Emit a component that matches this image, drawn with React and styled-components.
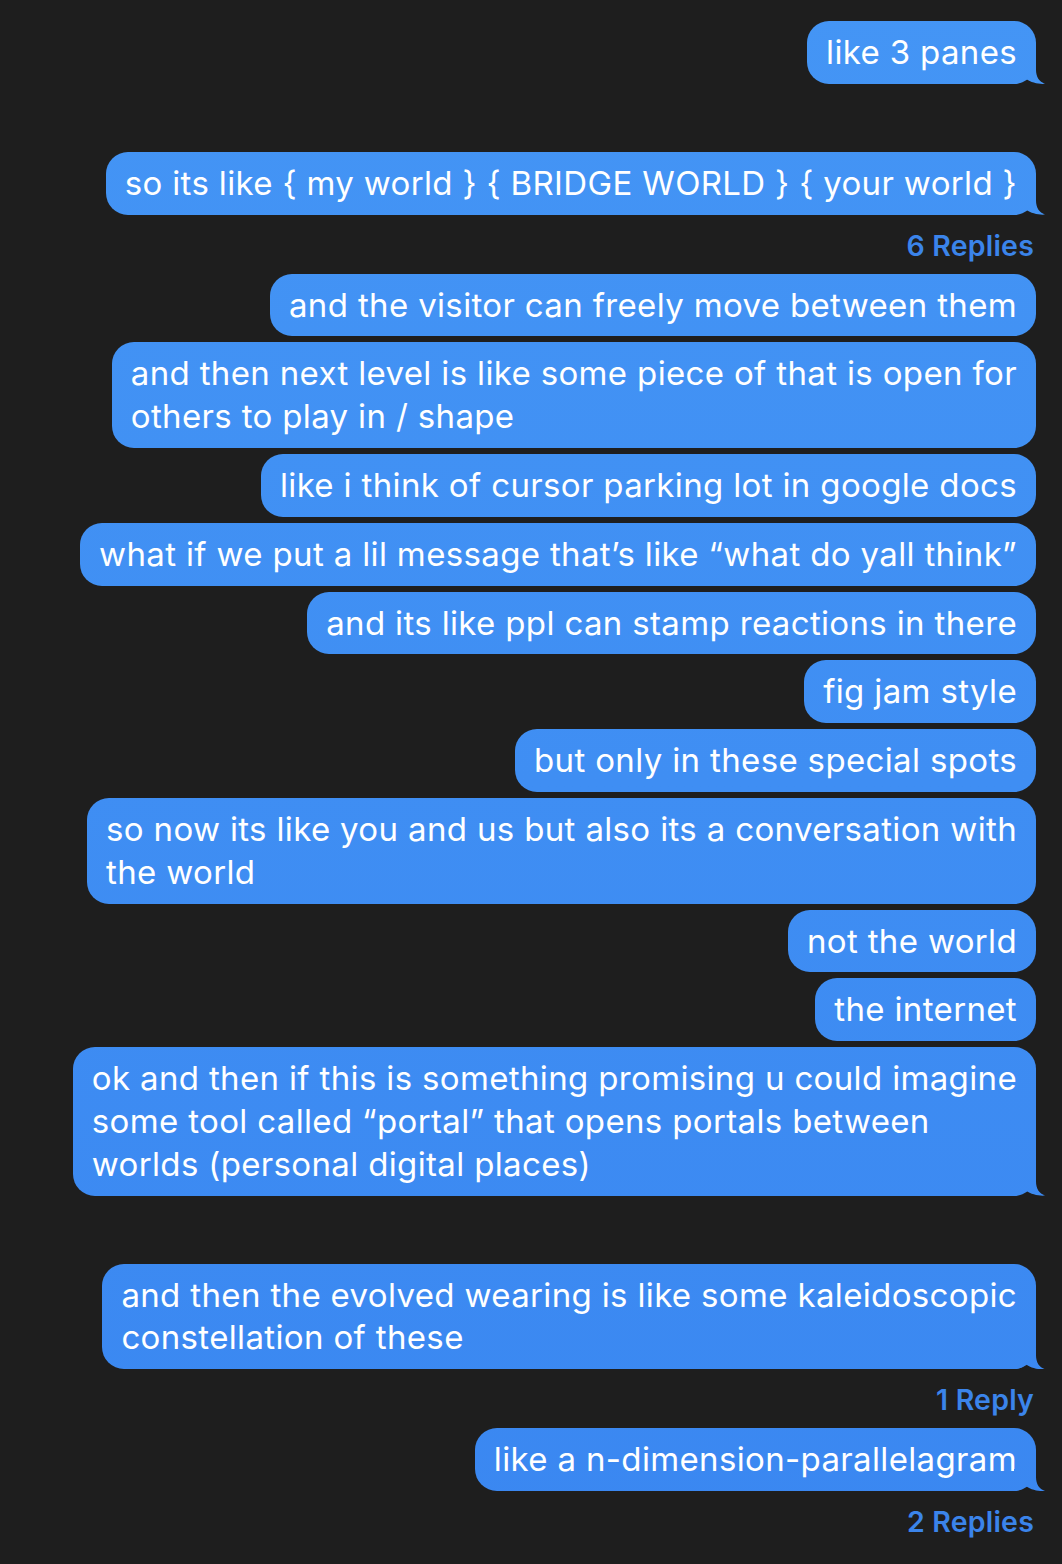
import React from 'react';
import styled, { createGlobalStyle } from 'styled-components';

const Global = createGlobalStyle`
  html, body {
    margin: 0;
    padding: 0;
    background: #1e1e1e;
  }
  body {
    font-family: Inter, "Noto Sans", "Liberation Sans", sans-serif;
    -webkit-font-smoothing: antialiased;
  }
`;

const BLUE = 'linear-gradient(180deg, #4495f5 0%, #3a87f1 100%) fixed';

const Thread = styled.div`
  display: flex;
  flex-direction: column;
  align-items: flex-end;
  gap: 6px;
  padding: 21px 26px 40px 0;
  min-height: 1564px;
  box-sizing: border-box;
`;

const Bubble = styled.div`
  position: relative;
  box-sizing: border-box;
  max-width: 980px;
  padding: 10px 19px;
  margin-top: ${(p) => (p.$spaced ? '62px' : '0')};
  border-radius: 22px;
  background: ${BLUE};
  color: #fff;
  font-size: 33px;
  line-height: 42.8px;
  letter-spacing: 0.35px;
  white-space: nowrap;

  &::after {
    content: ${(p) => (p.$tail ? "''" : 'none')};
    position: absolute;
    right: -9px;
    bottom: 0;
    width: 31px;
    height: 22px;
    background: ${BLUE};
    clip-path: path('M0 0 H22 V8 C22 15 25 20 31 22 C25 22.5 17 21 12 17 C9 20 5 22 0 22 Z');
  }
`;

const Replies = styled.div`
  padding: 8px 2px 5px 0;
  line-height: 34px;
  font-size: 28.5px;
  font-weight: 600;
  letter-spacing: 0.2px;
  color: #3b84ea;
`;

const messages = [
  { lines: ['like 3 panes'], tail: true },
  { lines: ['so its like { my world } { BRIDGE WORLD } { your world }'], tail: true, spaced: true, replies: '6 Replies' },
  { lines: ['and the visitor can freely move between them'] },
  { lines: ['and then next level is like some piece of that is open for', 'others to play in / shape'] },
  { lines: ['like i think of cursor parking lot in google docs'] },
  { lines: ['what if we put a lil message that\u2019s like \u201cwhat do yall think\u201d'] },
  { lines: ['and its like ppl can stamp reactions in there'] },
  { lines: ['fig jam style'] },
  { lines: ['but only in these special spots'] },
  { lines: ['so now its like you and us but also its a conversation with', 'the world'] },
  { lines: ['not the world'] },
  { lines: ['the internet'] },
  {
    lines: [
      'ok and then if this is something promising u could imagine',
      'some tool called \u201cportal\u201d that opens portals between',
      'worlds (personal digital places)',
    ],
    tail: true,
  },
  { lines: ['and then the evolved wearing is like some kaleidoscopic', 'constellation of these'], tail: true, spaced: true, replies: '1 Reply' },
  { lines: ['like a n-dimension-parallelagram'], tail: true, replies: '2 Replies' },
];

export default function App() {
  return (
    <>
      <Global />
      <Thread>
        {messages.map((m, i) => (
          <React.Fragment key={i}>
            <Bubble $tail={m.tail} $spaced={m.spaced}>
              {m.lines.map((l, j) => (
                <div key={j}>{l}</div>
              ))}
            </Bubble>
            {m.replies && <Replies>{m.replies}</Replies>}
          </React.Fragment>
        ))}
      </Thread>
    </>
  );
}
